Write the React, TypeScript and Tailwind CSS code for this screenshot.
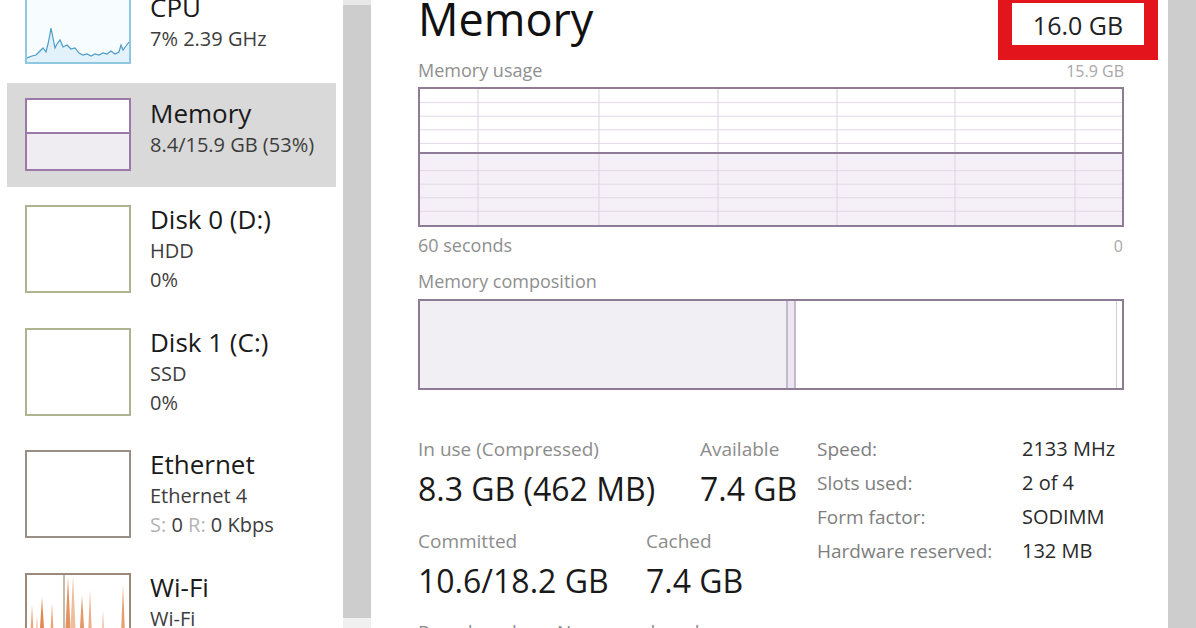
import React from "react";

function CpuThumb() {
  const pts =
    "0,80 5,78 9,77 13,73 16,70 19,74 21,66 23,56 24,50 26,60 28,70 30,66 33,62 36,69 40,67 44,71 48,70 52,75 56,77 60,76 64,78 68,76 72,77 76,75 80,76 84,73 88,76 92,74 94,67 96,72 99,68 102,64";
  return (
    <div className="mt-[-24px] w-[106px] h-[88px] shrink-0 border-2 border-[#8fc7e1] bg-[#f7fcfe]">
      <svg viewBox="0 0 102 84" preserveAspectRatio="none" className="block w-full h-full">
        <polygon points={`${pts} 102,84 0,84`} fill="#e3f2fa" />
        <polyline points={pts} fill="none" stroke="#4a9cc9" strokeWidth="1.2" />
      </svg>
    </div>
  );
}

function WifiThumb() {
  const bars: [number, number, string, number][] = [
    [5, 30, "#eaa676", 3],
    [10, 40, "#f1c6a6", 3],
    [15, 22, "#e08a52", 4],
    [25, 28, "#eaa676", 3],
    [41, 2, "#e39360", 4],
    [46, 0, "#efbf9c", 4],
    [55, 20, "#e49a68", 4],
    [63, 15, "#ebb08a", 3],
    [76, 35, "#f1cbb2", 3],
    [96, 10, "#e6a070", 3],
  ];
  return (
    <div className="w-[106px] h-[88px] shrink-0 mt-[18px] border-2 border-[#9a8a7c] bg-white">
      <svg viewBox="0 0 102 84" preserveAspectRatio="none" className="block w-full h-full">
        <line x1="37" y1="0" x2="37" y2="84" stroke="#b3a393" strokeWidth="1.5" />
        {bars.map(([x, y, c, w], i) => (
          <polygon key={i} points={`${x - w},84 ${x},${y} ${x + w},84`} fill={c} />
        ))}
      </svg>
    </div>
  );
}

function SideText({ title, lines, mt }: { title: string; lines: React.ReactNode[]; mt: string }) {
  return (
    <div className={`ml-[19px] ${mt}`}>
      <div className="text-[26px] leading-[33px] text-[#1a1a1a] whitespace-nowrap">{title}</div>
      {lines.map((l, i) => (
        <div key={i} className="text-[20px] leading-[29px] text-[#3d3d3d] whitespace-nowrap">
          {l}
        </div>
      ))}
    </div>
  );
}

function PlainThumb({ color }: { color: string }) {
  return <div className={`w-[106px] h-[88px] shrink-0 mt-[18px] border-2 bg-white ${color}`} />;
}

function Sidebar() {
  return (
    <div className="w-[343px] shrink-0 flex flex-col">
      <div className="h-[83px] shrink-0 flex pl-[25px]">
        <CpuThumb />
        <SideText title="CPU" lines={["7% 2.39 GHz"]} mt="mt-[-9px]" />
      </div>
      <div className="h-[104px] shrink-0 mx-[7px] bg-[#d9d9d9] flex pl-[18px] pt-[15px]">
        <div className="w-[106px] h-[73px] shrink-0 border-2 border-[#9c79a8] bg-white flex flex-col">
          <div className="h-[32px] shrink-0 bg-white" />
          <div className="flex-1 border-t-2 border-[#9c79a8] bg-[#efedf1]" />
        </div>
        <SideText title="Memory" lines={["8.4/15.9 GB (53%)"]} mt="mt-[-1px]" />
      </div>
      <div className="h-[123px] shrink-0 flex pl-[25px]">
        <PlainThumb color="border-[#adb492]" />
        <SideText title="Disk 0 (D:)" lines={["HDD", "0%"]} mt="mt-[16px]" />
      </div>
      <div className="h-[122px] shrink-0 flex pl-[25px]">
        <PlainThumb color="border-[#adb492]" />
        <SideText title="Disk 1 (C:)" lines={["SSD", "0%"]} mt="mt-[16px]" />
      </div>
      <div className="h-[123px] shrink-0 flex pl-[25px]">
        <PlainThumb color="border-[#9a8f84]" />
        <SideText
          title="Ethernet"
          lines={[
            "Ethernet 4",
            <span key="s">
              <span className="text-[#b4b4b4]">S:</span> 0 <span className="text-[#b4b4b4]">R:</span> 0 Kbps
            </span>,
          ]}
          mt="mt-[16px]"
        />
      </div>
      <div className="h-[123px] shrink-0 flex pl-[25px]">
        <WifiThumb />
        <SideText title="Wi-Fi" lines={["Wi-Fi", "0%"]} mt="mt-[16px]" />
      </div>
    </div>
  );
}

function UsageGraph() {
  const vx = [58, 179, 298, 417, 535, 655];
  const hy = [13.6, 27.2, 40.8, 54.4, 81.6, 95.2, 108.8, 122.4];
  return (
    <div className="mt-[5px] h-[140px] shrink-0 border-2 border-[#8e7b96] bg-white">
      <svg viewBox="0 0 702 136" preserveAspectRatio="none" className="block w-full h-full">
        <rect x="0" y="64" width="702" height="72" fill="#f5eff7" />
        {hy.map((y) => (
          <line key={y} x1="0" y1={y} x2="702" y2={y} stroke="#e2d9e6" strokeWidth="1" />
        ))}
        {vx.map((x) => (
          <line key={x} x1={x} y1="0" x2={x} y2="136" stroke="#ddd2e2" strokeWidth="1" />
        ))}
        <line x1="0" y1="64" x2="702" y2="64" stroke="#8e7b96" strokeWidth="2" />
      </svg>
    </div>
  );
}

function Composition() {
  return (
    <div className="mt-[6px] h-[91px] shrink-0 border-2 border-[#8e7b96] flex bg-white">
      <div className="w-[368px] shrink-0 bg-[#f1eff3] border-r-2 border-[#c5b7cc]" />
      <div className="w-[8px] shrink-0 bg-[#ece6f0] border-r-2 border-[#c5b7cc]" />
      <div className="flex-1" />
      <div className="w-[6px] shrink-0 border-l border-[#d6cadd]" />
    </div>
  );
}

function Stat({ label, value, w }: { label: string; value: string; w?: string }) {
  return (
    <div className={`${w ?? ""} shrink-0`}>
      <div className="text-[19px] leading-[24px] text-[#8c8c8c] whitespace-nowrap">{label}</div>
      <div className="mt-[8px] text-[32px] leading-[40px] text-[#1a1a1a] whitespace-nowrap">{value}</div>
    </div>
  );
}

function Main() {
  const specs: [string, string][] = [
    ["Speed:", "2133 MHz"],
    ["Slots used:", "2 of 4"],
    ["Form factor:", "SODIMM"],
    ["Hardware reserved:", "132 MB"],
  ];
  return (
    <div className="flex-1 flex flex-col pl-[47px] pr-[44px] bg-white">
      <div className="h-[58px] shrink-0 flex justify-between items-start">
        <div className="text-[45px] leading-[54px] mt-[-8px] text-[#111111]">Memory</div>
        <div className="w-[160px] h-[60px] shrink-0 mr-[-34px] border-t-[3px] border-x-[14px] border-b-[15px] border-[#e3141c] bg-white text-center text-[25px] leading-[40px] pt-[2px] text-[#222222]">
          16.0 GB
        </div>
      </div>
      <div className="h-[24px] shrink-0 flex justify-between items-baseline">
        <span className="text-[18px] leading-[24px] text-[#8f8f8f]">Memory usage</span>
        <span className="text-[16px] leading-[24px] text-[#a8a8a8]">15.9 GB</span>
      </div>
      <UsageGraph />
      <div className="mt-[6px] h-[24px] shrink-0 flex justify-between items-baseline">
        <span className="text-[18px] leading-[24px] text-[#8f8f8f]">60 seconds</span>
        <span className="text-[16px] leading-[24px] text-[#a8a8a8] mr-[1px]">0</span>
      </div>
      <div className="mt-[12px] h-[24px] shrink-0 text-[18px] leading-[24px] text-[#8f8f8f]">Memory composition</div>
      <Composition />
      <div className="mt-[47px] shrink-0 flex">
        <div className="w-[399px] shrink-0 flex flex-col">
          <div className="flex shrink-0">
            <Stat label="In use (Compressed)" value="8.3 GB (462 MB)" w="w-[282px]" />
            <Stat label="Available" value="7.4 GB" />
          </div>
          <div className="flex shrink-0 mt-[20px]">
            <Stat label="Committed" value="10.6/18.2 GB" w="w-[228px]" />
            <Stat label="Cached" value="7.4 GB" />
          </div>
          <div className="flex shrink-0 mt-[19px]">
            <div className="w-[139px] text-[19px] leading-[24px] text-[#8c8c8c]">Paged pool</div>
            <div className="text-[19px] leading-[24px] text-[#8c8c8c]">Non-paged pool</div>
          </div>
        </div>
        <div className="mt-[-5px] flex flex-col">
          {specs.map(([k, v]) => (
            <div key={k} className="flex h-[34px] shrink-0 items-center">
              <div className="w-[205px] text-[19px] text-[#7e7e7e] whitespace-nowrap">{k}</div>
              <div className="text-[20px] text-[#2a2a2a] whitespace-nowrap">{v}</div>
            </div>
          ))}
        </div>
      </div>
    </div>
  );
}

export default function App() {
  return (
    <div className="w-[1196px] h-[628px] overflow-hidden bg-white flex font-['Open_Sans',sans-serif]">
      <Sidebar />
      <div className="w-[28px] shrink-0 flex flex-col">
        <div className="h-[5px] shrink-0 bg-[#e8e8e8]" />
        <div className="flex-1 bg-[#cdcdcd]" />
        <div className="h-[10px] shrink-0 bg-[#f0f0f0]" />
      </div>
      <Main />
      <div className="w-[28px] shrink-0 bg-[#cdcdcd]" />
    </div>
  );
}
